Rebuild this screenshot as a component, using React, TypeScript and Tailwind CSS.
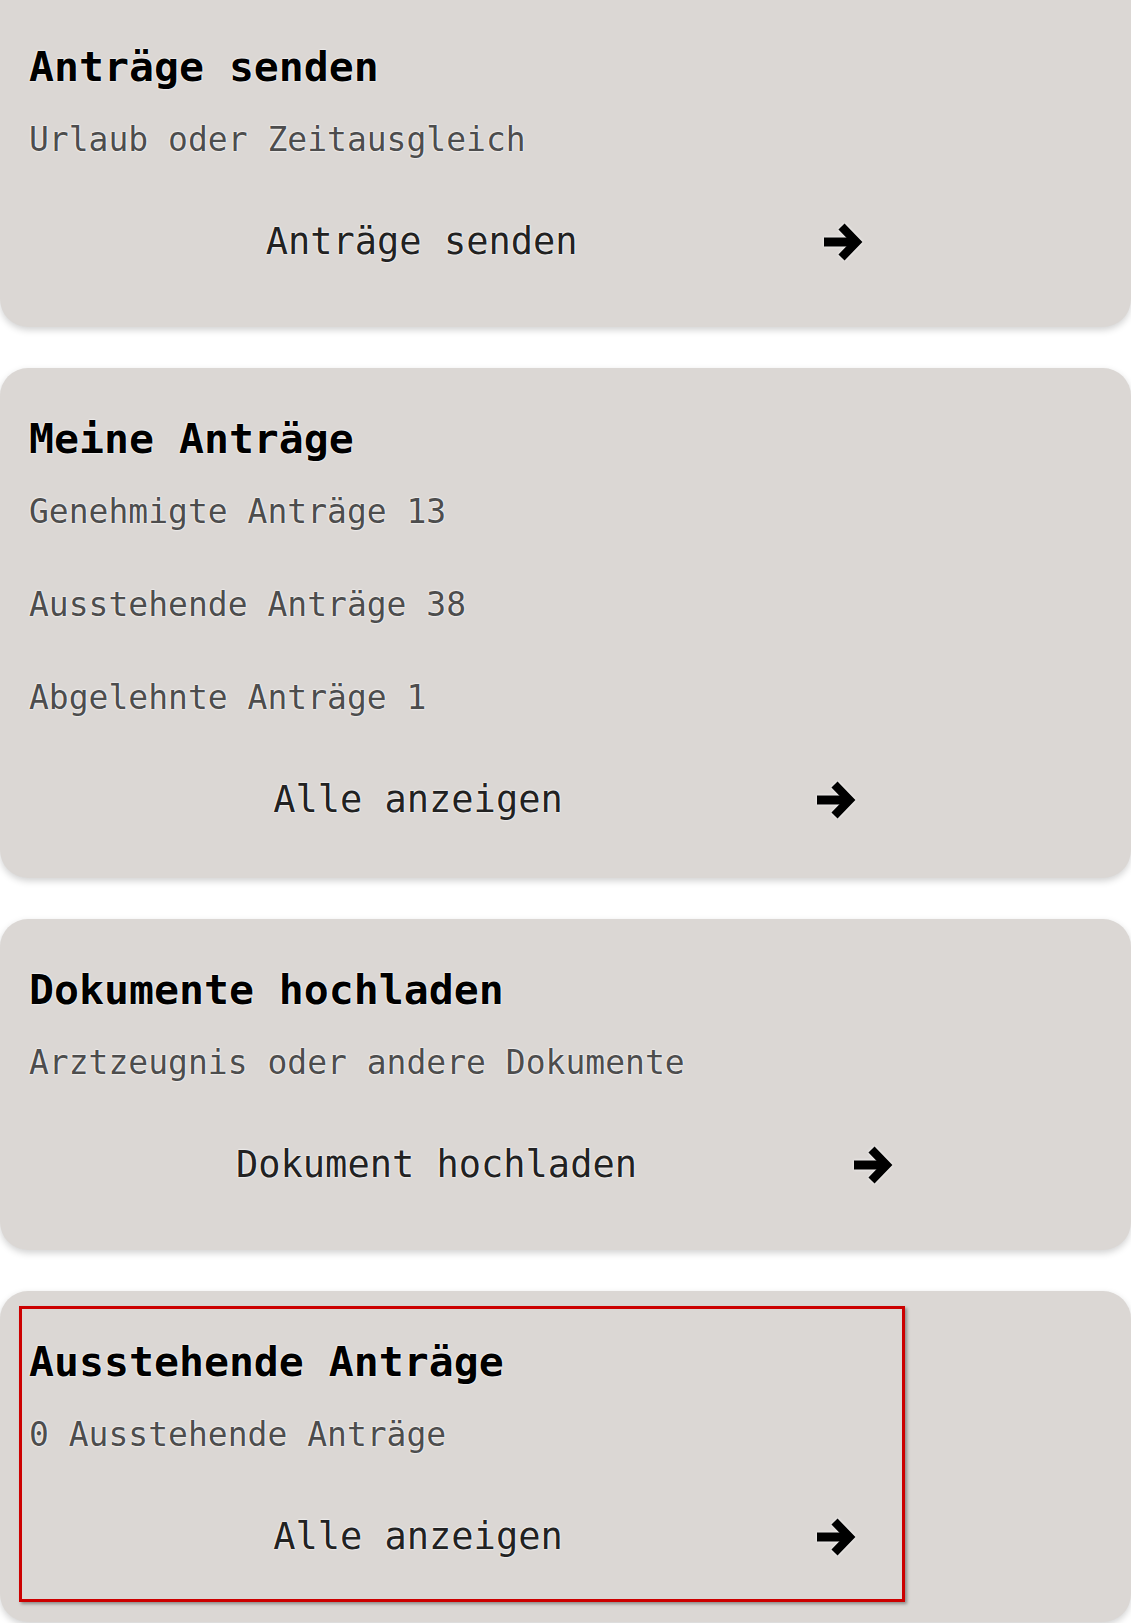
import React from 'react';

const halo = '[text-shadow:0_0_2px_#ffffff,0_0_2px_#ffffff]';

function Arrow() {
  return (
    <svg width="40" height="40" viewBox="0 0 40 40" className="drop-shadow-[0_0_1.5px_#ffffff]">
      <rect x="1" y="15.5" width="30" height="9" fill="#000" />
      <polyline points="18.5,4.5 33.5,20 18.5,35.5" fill="none" stroke="#000" strokeWidth="8.5" strokeLinejoin="miter" strokeLinecap="butt" />
    </svg>
  );
}

function ActionRow({ label }: { label: string }) {
  return (
    <div className="mt-[52px] h-[60px] flex items-center justify-evenly">
      <span className={`text-[37px] leading-[44px] text-[#222222] ${halo}`}>{label}</span>
      <Arrow />
    </div>
  );
}

function Title({ children }: { children: React.ReactNode }) {
  return (
    <h2 className={`pl-[9px] text-[41.5px] leading-[50px] font-bold text-black ${halo}`}>{children}</h2>
  );
}

function Line({ children, className = '' }: { children: React.ReactNode; className?: string }) {
  return (
    <p className={`pl-[9px] text-[33px] leading-[40px] text-[#4d4d4d] ${halo} ${className}`}>{children}</p>
  );
}

export default function App() {
  const card = 'relative bg-[#dbd7d4] pl-[20px] pr-[22px] shadow-[0_3px_7px_rgba(0,0,0,0.18)]';

  return (
    <div className="min-h-[1623px] bg-white overflow-hidden font-['DejaVu_Sans_Mono',monospace] flex flex-col gap-[41px]">
      <div className={`${card} rounded-b-[28px] pt-[42px] pb-[55px]`}>
        <Title>Anträge senden</Title>
        <Line className="mt-[28px]">Urlaub oder Zeitausgleich</Line>
        <ActionRow label="Anträge senden" />
      </div>

      <div className={`${card} rounded-[28px] pt-[46px] pb-[48px]`}>
        <Title>Meine Anträge</Title>
        <Line className="mt-[28px]">Genehmigte Anträge 13</Line>
        <Line className="mt-[53px]">Ausstehende Anträge 38</Line>
        <Line className="mt-[53px]">Abgelehnte Anträge 1</Line>
        <ActionRow label="Alle anzeigen" />
      </div>

      <div className={`${card} rounded-[28px] pt-[46px] pb-[55px]`}>
        <Title>Dokumente hochladen</Title>
        <Line className="mt-[28px]">Arztzeugnis oder andere Dokumente</Line>
        <ActionRow label="Dokument hochladen" />
      </div>

      <div className={`${card} rounded-[28px] pt-[46px] pb-[55px]`}>
        <Title>Ausstehende Anträge</Title>
        <Line className="mt-[28px]">0 Ausstehende Anträge</Line>
        <ActionRow label="Alle anzeigen" />
        {/* highlight frame */}
        <div className="absolute left-[19px] top-[15px] w-[886px] h-[296px] border-[3px] border-[#cc0000] shadow-[2px_2px_3px_rgba(0,0,0,0.35)] pointer-events-none" />
      </div>
    </div>
  );
}
